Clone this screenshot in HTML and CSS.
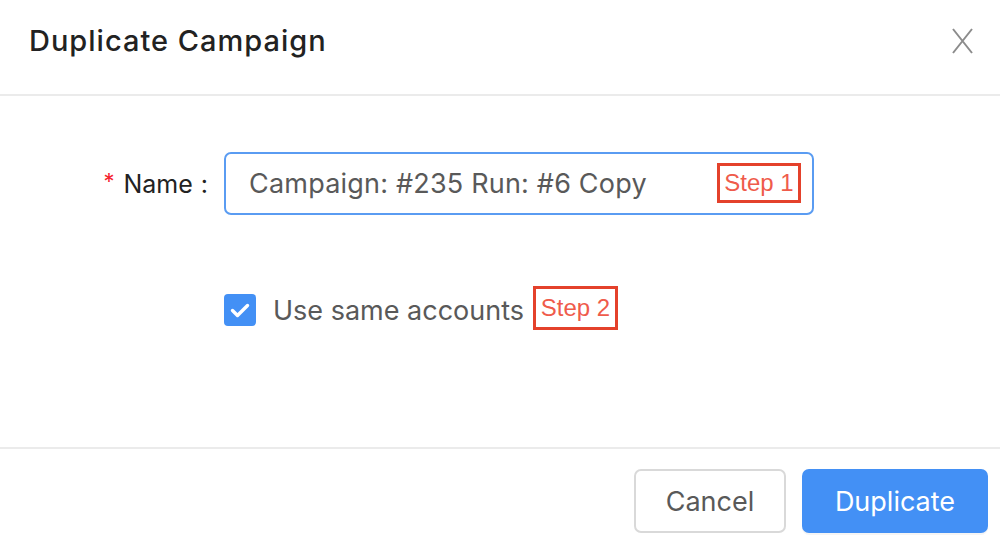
FILE: index.html
```html
<!DOCTYPE html>
<html lang="en">
<head>
<meta charset="utf-8">
<title>Duplicate Campaign</title>
<link rel="stylesheet" href="styles.css">
</head>
<body>
<div class="modal">
  <header class="modal-header">
    <h1 class="modal-title">Duplicate Campaign</h1>
    <button class="close-btn" aria-label="Close">
      <svg width="24" height="26" viewBox="0 0 24 26"><path d="M3 1 L22 25 M22 1 L3 25" stroke="#8c8c8c" stroke-width="2" fill="none"/></svg>
    </button>
  </header>
  <main class="modal-body">
    <div class="form-row">
      <label class="form-label"><span class="req">*</span>Name<span class="colon">:</span></label>
      <div class="input-wrap">
        <div class="text-input">Campaign: #235 Run: #6 Copy</div>
        <span class="step step-1">Step 1</span>
      </div>
    </div>
    <div class="check-row">
      <span class="checkbox">
        <svg width="32" height="32" viewBox="0 0 32 32"><path d="M8.5 16.5 L13.5 21.5 L23.5 11.5" stroke="#fff" stroke-width="3.4" fill="none" stroke-linecap="round" stroke-linejoin="round"/></svg>
      </span>
      <span class="check-label">Use same accounts</span>
      <span class="step step-2">Step 2</span>
    </div>
  </main>
  <footer class="modal-footer">
    <button class="btn btn-default">Cancel</button>
    <button class="btn btn-primary">Duplicate</button>
  </footer>
</div>
</body>
</html>
```
FILE: styles.css
```css
* { box-sizing: border-box; }
html, body { margin: 0; padding: 0; background: #fff; }
body {
  font-family: Inter, "Noto Sans", "Liberation Sans", sans-serif;
  color: #262626;
  width: 1000px;
  height: 544px;
  overflow: hidden;
}
.modal { width: 1000px; height: 544px; display: flex; flex-direction: column; }
.modal-header {
  height: 96px;
  display: flex;
  align-items: center;
  justify-content: space-between;
  padding: 0 26px 13px 29px;
  border-bottom: 2px solid #ebebeb;
}
.modal-title {
  margin: 0;
  font-size: 29px;
  font-weight: 500;
  color: #222;
  letter-spacing: 1px;
}
.close-btn {
  background: none;
  border: 0;
  padding: 0;
  width: 24px;
  height: 26px;
  display: flex;
}
.modal-body {
  height: 353px;
  padding-top: 56px;
  border-bottom: 2px solid #ebebeb;
}
.form-row {
  display: flex;
  align-items: center;
}
.form-label {
  width: 224px;
  padding-right: 16px;
  display: flex;
  justify-content: flex-end;
  align-items: center;
  font-size: 25px;
  color: #222;
}
.req { color: #f5222d; font-size: 22px; margin-right: 9px; position: relative; top: -3px; }
.colon { margin-left: 8px; }
.input-wrap {
  position: relative;
  width: 590px;
}
.text-input {
  height: 63px;
  border: 2px solid #5a9cf2;
  border-radius: 7px;
  padding-left: 23px;
  display: flex;
  align-items: center;
  font-size: 27px;
  letter-spacing: 0.2px;
  color: #595959;
}
.step {
  display: inline-flex;
  align-items: center;
  justify-content: center;
  border: 3px solid #e4412b;
  color: #ef5b4b;
  font-family: "Liberation Sans", Arial, sans-serif;
  font-size: 24px;
  height: 44px;
  width: 85px;
}
.step-1 {
  position: absolute;
  left: 493px;
  top: 11px;
  width: 84px;
  height: 40px;
}
.check-row {
  display: flex;
  align-items: center;
  margin-top: 73px;
  padding-left: 224px;
}
.checkbox {
  width: 32px;
  height: 32px;
  border-radius: 4px;
  background: #4390f5;
  display: flex;
}
.check-label {
  margin-left: 17px;
  font-size: 27px;
  color: #595959;
}
.step-2 { margin-left: 9px; position: relative; top: -2px; }
.modal-footer {
  flex: 1;
  display: flex;
  justify-content: flex-end;
  align-items: flex-start;
  padding: 20px 12px 0 0;
  gap: 16px;
}
.btn {
  font-family: Inter, "Noto Sans", "Liberation Sans", sans-serif;
  height: 64px;
  border-radius: 7px;
  font-size: 27px;
  padding: 0;
}
.btn-default {
  width: 152px;
  background: #fff;
  border: 2px solid #d9d9d9;
  color: #595959;
}
.btn-primary {
  width: 186px;
  background: #4390f5;
  border: 0;
  color: #fff;
  box-shadow: 0 2px 0 rgba(0,0,0,0.04);
}
```
